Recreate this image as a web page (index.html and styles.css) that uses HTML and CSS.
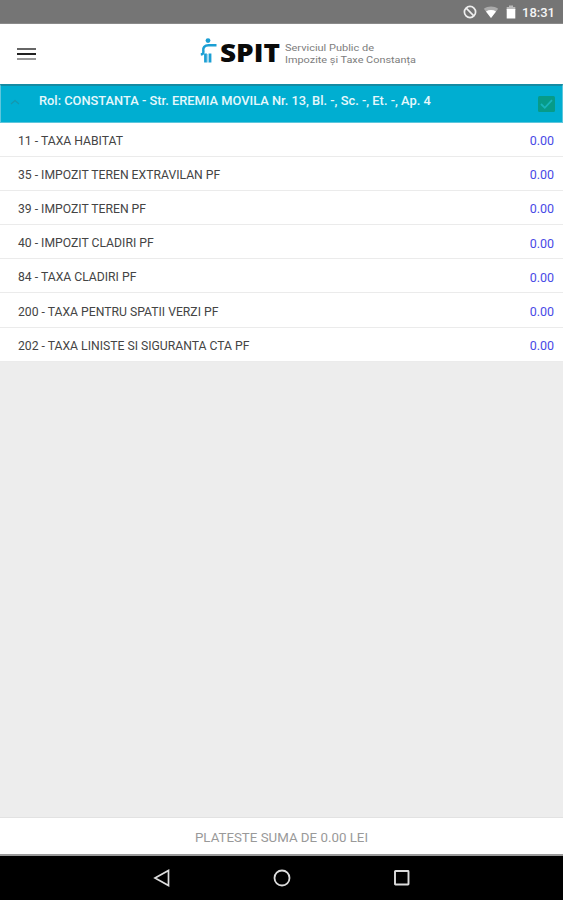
FILE: index.html
```html
<!DOCTYPE html>
<html lang="ro">
<head>
    <meta charset="UTF-8">
    <meta name="viewport" content="width=device-width, initial-scale=1.0">
    <title>SPIT Constanța</title>
    <link rel="stylesheet" href="styles.css">
</head>
<body>
    <div class="status-bar">
        <svg class="status-icon" width="14" height="14" viewBox="0 0 14 14">
            <circle cx="7" cy="7" r="5.6" fill="none" stroke="#eee" stroke-width="1.7"/>
            <path d="M3.2 3.2L10.8 10.8" stroke="#eee" stroke-width="1.7"/>
        </svg>
        <svg class="wifi-icon" width="16" height="14" viewBox="0 0 16 14">
            <path d="M8 13L.8 3.8C5 .6 11 .6 15.2 3.8z" fill="#aaa"/>
            <path d="M8 13L3 6.4C6 4.6 10 4.6 13 6.4z" fill="#fff"/>
        </svg>
        <svg class="battery-icon" width="10" height="14" viewBox="0 0 10 14">
            <path d="M3 .5h4V2h2.3v3H.7V2H3z" fill="#bbb"/>
            <path d="M.7 4h8.6v9.5H.7z" fill="#fff"/>
        </svg>
        <span class="clock">18:31</span>
    </div>

    <header class="toolbar">
        <button class="menu-button" aria-label="Meniu">
            <span class="line"></span>
            <span class="line line-dark"></span>
            <span class="line line-light"></span>
        </button>
        <div class="logo">
            <svg width="220" height="34" viewBox="0 0 220 34">
                <g fill="none" stroke="#1b9fd4">
                    <path d="M16.5 9.3H8.5C4.5 9.3 2.8 11.5 3.3 14.5C3.7 17 3.3 18.2 .8 18.5" stroke-width="2.5"/>
                    <path d="M5.5 17.5V26.5M10 17.5V26.5" stroke-width="2.8"/>
                    <path d="M7.7 18V26.5" stroke-width="1.7" stroke="#a5d8ee"/>
                </g>
                <circle cx="8" cy="4.6" r="2.4" fill="#1b9fd4"/>
                <text class="logo-name" x="20" y="26.2" textLength="60" lengthAdjust="spacingAndGlyphs">SPIT</text>
                <text class="logo-text" x="85" y="15.3" textLength="89" lengthAdjust="spacingAndGlyphs">Serviciul Public de</text>
                <text class="logo-text" x="85" y="26.5" textLength="131" lengthAdjust="spacingAndGlyphs">Impozite și Taxe Constanța</text>
            </svg>
        </div>
    </header>

    <main class="content">
        <div class="rol-header">
            <svg class="chevron" width="10" height="6" viewBox="0 0 10 6">
                <path d="M1 5L5 1.5L9 5" fill="none" stroke="#1697ad" stroke-width="1.2"/>
            </svg>
            <span class="rol-title">Rol: CONSTANTA - Str. EREMIA MOVILA Nr. 13, Bl. -, Sc. -, Et. -, Ap. 4</span>
            <svg class="checkbox" width="17" height="16" viewBox="0 0 17 16">
                <rect width="17" height="16" rx="1.5" fill="#079b88"/>
                <path d="M3 8L6.8 11.8L14 4.2" fill="none" stroke="#19b5bb" stroke-width="1.8"/>
            </svg>
        </div>
        <ul class="tax-list">
            <li class="tax-row"><span>11 - TAXA HABITAT</span><span class="amount">0.00</span></li>
            <li class="tax-row"><span>35 - IMPOZIT TEREN EXTRAVILAN PF</span><span class="amount">0.00</span></li>
            <li class="tax-row"><span>39 - IMPOZIT TEREN PF</span><span class="amount">0.00</span></li>
            <li class="tax-row"><span>40 - IMPOZIT CLADIRI PF</span><span class="amount">0.00</span></li>
            <li class="tax-row"><span>84 - TAXA CLADIRI PF</span><span class="amount">0.00</span></li>
            <li class="tax-row"><span>200 - TAXA PENTRU SPATII VERZI PF</span><span class="amount">0.00</span></li>
            <li class="tax-row"><span>202 - TAXA LINISTE SI SIGURANTA CTA PF</span><span class="amount">0.00</span></li>
        </ul>
    </main>

    <button class="pay-button">PLATESTE SUMA DE 0.00 LEI</button>

    <nav class="nav-bar">
        <svg width="18" height="18" viewBox="0 0 18 18">
            <path d="M15.5 1.5V16.5L2 9z" fill="none" stroke="#ddd" stroke-width="1.7"/>
        </svg>
        <svg width="18" height="18" viewBox="0 0 18 18">
            <circle cx="9" cy="9" r="7.5" fill="none" stroke="#ddd" stroke-width="1.8"/>
        </svg>
        <svg width="18" height="18" viewBox="0 0 18 18">
            <rect x="2" y="2" width="13.5" height="13.5" rx=".5" fill="none" stroke="#ddd" stroke-width="1.9"/>
        </svg>
    </nav>
</body>
</html>
```

FILE: styles.css
```css
* {
    box-sizing: border-box;
}

body {
    font-family: Roboto, Arial, sans-serif;
    background-color: #ededed;
    margin: 0;
    height: 100vh;
    display: flex;
    flex-direction: column;
    overflow: hidden;
}

svg {
    display: block;
    flex: none;
}

.status-bar {
    height: 24px;
    background-color: #757575;
    border-bottom: 1px solid #8a8a8a;
    display: flex;
    align-items: center;
    justify-content: flex-end;
    padding: 1px 8px 0 0;
    color: #f5f5f5;
}

.wifi-icon {
    margin-left: 6px;
}

.battery-icon {
    margin-left: 7px;
}

.clock {
    font-size: 13px;
    font-weight: 500;
    margin-left: 6px;
    width: 33px;
    white-space: nowrap;
}

.toolbar {
    height: 60px;
    background-color: #fff;
    display: flex;
    align-items: flex-start;
}

.menu-button {
    width: 19px;
    padding: 0;
    margin: 24px 0 0 17px;
    border: none;
    background: none;
    display: flex;
    flex-direction: column;
    gap: 3px;
    cursor: pointer;
}

.line {
    height: 2px;
    width: 19px;
    background-color: #666;
}

.line-dark {
    background-color: #222;
}

.line-light {
    background-color: #999;
}

.logo {
    margin: 12px 0 0 164px;
}

.logo-name {
    font-family: "Open Sans", sans-serif;
    font-size: 25px;
    font-weight: 800;
    fill: #0a0a0a;
}

.logo-text {
    font-family: Roboto, sans-serif;
    font-size: 9.5px;
    fill: #7d7d7d;
}

.content {
    flex: 1;
}

.rol-header {
    height: 38.5px;
    background-color: #00aed1;
    border: 1px solid #5ec6dc;
    border-top: 2px solid #168ba3;
    display: flex;
    align-items: flex-start;
    padding: 0 7px 0 9px;
    color: #e6f8fc;
}

.chevron {
    margin-top: 13px;
}

.rol-title {
    font-size: 12.85px;
    font-weight: 500;
    line-height: 16px;
    margin: 7px auto 0 19px;
    white-space: nowrap;
}

.checkbox {
    margin-top: 10px;
}

.tax-list {
    list-style: none;
    margin: 0;
    padding: 0;
    background-color: #fff;
}

.tax-row {
    height: 34.2px;
    display: flex;
    align-items: center;
    justify-content: space-between;
    padding: 3px 9px 0 18px;
    border-bottom: 1px solid #ebebeb;
    font-size: 12.2px;
    color: #444;
}

.amount {
    font-size: 12.5px;
    color: #4a4ae6;
}

.pay-button {
    height: 39px;
    padding-top: 3px;
    border: none;
    border-top: 1px solid #e2e2e2;
    border-bottom: 2px solid #999;
    background-color: #fff;
    font-family: inherit;
    font-size: 13.3px;
    color: #999;
    cursor: pointer;
}

.nav-bar {
    height: 44px;
    background-color: #000;
    display: flex;
    align-items: center;
    justify-content: center;
    gap: 102px;
}
```
